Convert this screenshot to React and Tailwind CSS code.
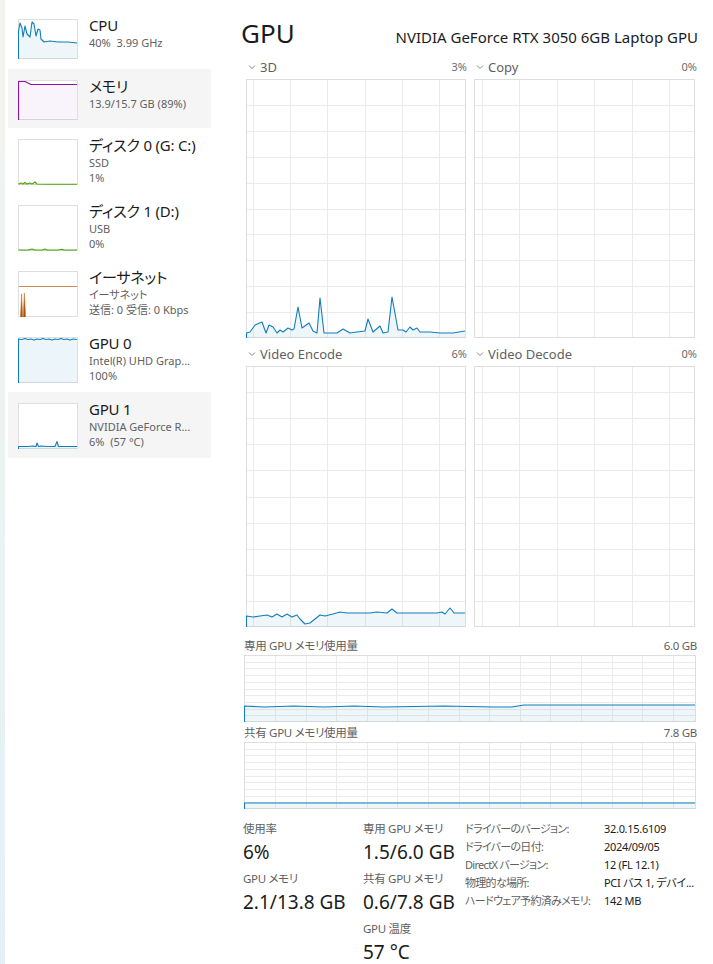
import React from "react";

const BLUE = "#117dbb";
const BLUE_FILL = "rgba(17,125,187,0.07)";

function Graph({ w, h, points, color = BLUE, fill = BLUE_FILL, grid, extra, border = "#dedede" }) {
  const v = [];
  const hz = [];
  if (grid) {
    for (let x = grid.ox; x < w - 1; x += grid.sx) v.push(Math.round(x));
    for (let i = 1; i < grid.rows; i++) hz.push(Math.round((h * i) / grid.rows));
  }
  const line = points ? "M" + points.map(([x, y]) => `${x} ${y}`).join(" L") : null;
  const area = points
    ? `${line} L${points[points.length - 1][0]} ${h} L${points[0][0]} ${h} Z`
    : null;
  return (
    <svg width={w} height={h} className="block shrink-0">
      <rect x="0.5" y="0.5" width={w - 1} height={h - 1} fill="#fff" stroke={border} />
      {v.map((x) => (
        <line key={"v" + x} x1={x + 0.5} x2={x + 0.5} y1={1} y2={h - 1} stroke="#ebebeb" />
      ))}
      {hz.map((y) => (
        <line key={"h" + y} x1={1} x2={w - 1} y1={y + 0.5} y2={y + 0.5} stroke="#ebebeb" />
      ))}
      {area && <path d={area} fill={fill} />}
      {extra}
      {line && <path d={line} fill="none" stroke={color} strokeWidth="1.1" strokeLinejoin="round" />}
    </svg>
  );
}

const P3D = [
  [0.5, 259], [0.5, 254], [4, 253], [9, 246], [16, 243], [20, 254], [23, 246], [27, 248], [31, 254],
  [34, 251], [37, 253], [42, 249], [46, 251], [48, 250], [52, 228], [56, 249], [63, 244], [67, 252],
  [71, 254], [74, 219], [78, 254], [91, 254], [97, 250], [104, 254], [111, 253], [119, 252],
  [122, 240], [127, 253], [134, 247], [137, 254], [142, 253], [146, 218], [152, 251], [157, 251],
  [160, 253], [164, 248], [167, 251], [171, 249], [174, 253], [184, 253], [194, 254], [207, 254],
  [219, 252],
];

const PENC = [
  [0.5, 261], [0.5, 250], [7, 251], [14, 250], [21, 249], [26, 251], [31, 248], [36, 251], [41, 248],
  [46, 251], [51, 249], [54, 253], [59, 258], [64, 257], [74, 249], [79, 250], [87, 248], [94, 246],
  [101, 247], [109, 247], [124, 247], [131, 246], [141, 247], [146, 243], [151, 247], [161, 247],
  [184, 247], [191, 247], [196, 246], [199, 248], [204, 242], [208, 247], [219, 247],
];

const PDED = [
  [0.5, 67], [0.5, 51], [20, 52], [50, 51], [80, 52], [110, 51], [140, 52], [200, 51], [250, 52],
  [268, 52], [280, 50], [451, 50],
];
const PSHR = [[0.5, 67], [0.5, 61], [451, 61]];

const MEMGRID = { ox: 31, sx: 30.6, rows: 10 };
const BIGGRID = { ox: 7, sx: 37.2, rows: 10 };

const thumbs = {
  cpu: (
    <Graph
      w={60}
      h={40}
      points={[
        [0.5, 40], [0.5, 12], [2, 4], [4, 9], [5, 18], [7, 7], [9, 15], [12, 18], [14, 3], [16, 5],
        [18, 17], [20, 10], [22, 11], [23, 20], [26, 23], [32, 22], [40, 23], [50, 23], [59, 24],
      ]}
    />
  ),
  mem: (
    <Graph
      w={60}
      h={40}
      color="#8b12ae"
      fill="rgba(139,18,174,0.05)"
      points={[[0.5, 40], [0.5, 1.5], [7, 1.5], [13, 4.5], [59, 4.5]]}
    />
  ),
  disk0: (
    <Graph
      w={60}
      h={46}
      color="#4da60c"
      fill="rgba(77,166,12,0.15)"
      points={[
        [0.5, 45], [3, 44], [5, 45], [7, 43.5], [9, 45], [12, 44], [14, 45], [17, 43], [19, 45],
        [30, 45.2], [59, 45.2],
      ]}
    />
  ),
  disk1: (
    <Graph
      w={60}
      h={46}
      color="#4da60c"
      fill="rgba(77,166,12,0.15)"
      points={[
        [0.5, 45], [10, 45], [14, 44], [17, 45], [24, 45], [27, 44], [29, 45], [40, 45], [44, 44.3],
        [46, 45], [59, 45],
      ]}
    />
  ),
  eth: (
    <Graph
      w={60}
      h={46}
      extra={
        <g>
          <line x1="1" x2="59" y1="15.5" y2="15.5" stroke="#c98a52" strokeWidth="1" />
          <path d="M2.5 46 L3.6 23 L4.6 46 Z M5.2 46 L6.4 22 L7.6 46 Z" fill="#a74f01" />
          <path d="M2.5 46 L3.6 23 L4.6 46 M5.2 46 L6.4 22 L7.6 46" fill="none" stroke="#c5772f" strokeWidth="0.6" />
        </g>
      }
    />
  ),
  gpu0: (
    <Graph
      w={60}
      h={46}
      fill="rgba(17,125,187,0.08)"
      points={[
        [0.5, 46], [0.5, 2], [4, 2.5], [7, 1.5], [10, 2.5], [13, 2], [16, 3], [19, 2], [22, 2.5],
        [25, 1.5], [28, 2.5], [31, 2], [34, 3], [37, 2], [40, 2.5], [43, 1.5], [46, 2.5], [49, 2],
        [52, 3], [55, 2], [59, 2.5],
      ]}
    />
  ),
  gpu1: (
    <Graph
      w={60}
      h={46}
      points={[
        [0.5, 46], [0.5, 43.5], [10, 43.5], [15, 43], [18, 43.5], [19, 40], [20.5, 43.5], [23, 43],
        [30, 43.5], [37, 43.5], [39, 38.5], [40.5, 43.5], [50, 43.5], [59, 43.5],
      ]}
    />
  ),
};

const items = [
  { t: "CPU", s: ["40%  3.99 GHz"], h: 61, g: "cpu" },
  { t: "メモリ", s: ["13.9/15.7 GB (89%)"], h: 59, g: "mem", sel: true },
  { t: "ディスク 0 (G: C:)", s: ["SSD", "1%"], h: 66, g: "disk0" },
  { t: "ディスク 1 (D:)", s: ["USB", "0%"], h: 66, g: "disk1" },
  { t: "イーサネット", s: ["イーサネット", "送信: 0 受信: 0 Kbps"], h: 66, g: "eth" },
  { t: "GPU 0", s: ["Intel(R) UHD Grap...", "100%"], h: 66, g: "gpu0" },
  { t: "GPU 1", s: ["NVIDIA GeForce R...", "6%  (57 °C)"], h: 66, g: "gpu1", sel: true },
];

function Chevron() {
  return (
    <svg width="8" height="6" viewBox="0 0 8 6" className="shrink-0">
      <path d="M1 1.5 L4 4.5 L7 1.5" fill="none" stroke="#8a8a8a" strokeWidth="1" />
    </svg>
  );
}

function ChartHead({ label, pct }) {
  return (
    <div className="flex h-[18px] items-center justify-between">
      <div className="flex items-center gap-[4px] pl-[2px]">
        <Chevron />
        <span className="text-[13px] leading-[18px] text-[#5f5f5f]">{label}</span>
      </div>
      <span className="text-[11px] leading-[18px] text-[#6b6b6b]">{pct}</span>
    </div>
  );
}

function Stat({ label, value }) {
  return (
    <div className="mb-[4px]">
      <div className="whitespace-nowrap text-[11.5px] leading-[16px] tracking-[-0.3px] text-[#5f5f5f]">{label}</div>
      <div className="whitespace-nowrap text-[19px] leading-[30px] text-[#1b1b1b]">{value}</div>
    </div>
  );
}

const props = [
  ["ドライバーのバージョン:", "32.0.15.6109"],
  ["ドライバーの日付:", "2024/09/05"],
  ["DirectX バージョン:", "12 (FL 12.1)"],
  ["物理的な場所:", "PCI バス 1, デバイ..."],
  ["ハードウェア予約済みメモリ:", "142 MB"],
];

export default function App() {
  return (
    <div className="flex h-[964px] w-[713px] overflow-hidden bg-white font-['Noto_Sans','Noto_Sans_CJK_JP',sans-serif] [font-feature-settings:'palt'] text-[#1b1b1b]">
      <div className="w-[5px] shrink-0 bg-gradient-to-b from-[#f3f4ee] to-[#e3f1f7]" />
      <div className="flex flex-1 flex-col">
        <div className="h-[2px] bg-[#eef1f0]" />
        <div className="flex flex-1">
          {/* sidebar */}
          <div className="w-[207px] shrink-0 pl-[3px] pt-[8px]">
            {items.map((it) => (
              <div
                key={it.t}
                style={{ height: it.h }}
                className={`flex w-[203px] gap-[11px] pl-[10px] pt-[11px] ${it.sel ? "bg-[#f5f5f5]" : ""}`}
              >
                {thumbs[it.g]}
                <div className="-mt-[3px] flex flex-col">
                  <div className="whitespace-nowrap text-[15px] leading-[19px] tracking-[-0.2px] text-[#1b1b1b]">{it.t}</div>
                  {it.s.map((s) => (
                    <div key={s} className="whitespace-pre text-[11px] leading-[15px] text-[#616161]">
                      {s}
                    </div>
                  ))}
                </div>
              </div>
            ))}
          </div>

          {/* main */}
          <div className="ml-[28px] w-[458px] shrink-0 pt-[17px]">
            <div className="flex h-[32px] items-baseline justify-between">
              <span className="pl-[1px] text-[26px] leading-[32px] text-[#1b1b1b]">GPU</span>
              <span className="text-[15px] leading-[20px] text-[#1b1b1b]">
                NVIDIA GeForce RTX 3050 6GB Laptop GPU
              </span>
            </div>

            <div className="mt-[9px] flex gap-[7px] pl-[6px]">
              <div className="w-[221px]">
                <ChartHead label="3D" pct="3%" />
                <div className="mt-[3px]">
                  <Graph w={220} h={259} grid={BIGGRID} points={P3D} />
                </div>
              </div>
              <div className="w-[223px]">
                <ChartHead label="Copy" pct="0%" />
                <div className="mt-[3px]">
                  <Graph w={221} h={259} grid={{ ox: 8, sx: 37.4, rows: 10 }} />
                </div>
              </div>
            </div>

            <div className="mt-[7px] flex gap-[7px] pl-[6px]">
              <div className="w-[221px]">
                <ChartHead label="Video Encode" pct="6%" />
                <div className="mt-[3px]">
                  <Graph w={220} h={261} grid={BIGGRID} points={PENC} />
                </div>
              </div>
              <div className="w-[223px]">
                <ChartHead label="Video Decode" pct="0%" />
                <div className="mt-[3px]">
                  <Graph w={221} h={261} grid={{ ox: 8, sx: 37.4, rows: 10 }} />
                </div>
              </div>
            </div>

            <div className="ml-[4px] mt-[11px] w-[453px]">
              <div className="flex justify-between text-[11.5px] leading-[16px] tracking-[-0.3px] text-[#5f5f5f]">
                <span>専用 GPU メモリ使用量</span>
                <span>6.0 GB</span>
              </div>
              <div className="mt-[1px]">
                <Graph w={452} h={67} grid={MEMGRID} points={PDED} />
              </div>
              <div className="mt-[3px] flex justify-between text-[11.5px] leading-[16px] tracking-[-0.3px] text-[#5f5f5f]">
                <span>共有 GPU メモリ使用量</span>
                <span>7.8 GB</span>
              </div>
              <div className="mt-[1px]">
                <Graph w={452} h={67} grid={MEMGRID} points={PSHR} />
              </div>
            </div>

            <div className="ml-[3px] mt-[12px] flex">
              <div className="w-[120px] shrink-0">
                <Stat label="使用率" value="6%" />
                <Stat label="GPU メモリ" value="2.1/13.8 GB" />
              </div>
              <div className="w-[102px] shrink-0">
                <Stat label="専用 GPU メモリ" value="1.5/6.0 GB" />
                <Stat label="共有 GPU メモリ" value="0.6/7.8 GB" />
                <Stat label="GPU 温度" value="57 °C" />
              </div>
              <div className="-mt-[1px] flex flex-col">
                {props.map(([k, v]) => (
                  <div key={k} className="flex whitespace-nowrap text-[11px] leading-[18px]">
                    <span className="w-[139px] shrink-0 tracking-[-0.7px] text-[#5f5f5f]">{k}</span>
                    <span className="tracking-[-0.3px] text-[#1b1b1b]">{v}</span>
                  </div>
                ))}
              </div>
            </div>
          </div>
        </div>
      </div>
    </div>
  );
}
